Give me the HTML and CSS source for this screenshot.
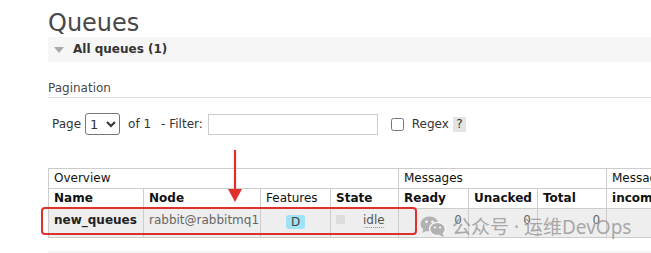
FILE: index.html
```html
<!DOCTYPE html>
<html lang="en">
<head>
    <meta charset="UTF-8">
    <title>Queues</title>
    <link rel="stylesheet" href="styles.css">
</head>
<body>
    <div class="page">
        <h1>Queues</h1>
        <div class="section-bar"><span class="toggle"></span>All queues (1)</div>

        <div class="pagination-title">Pagination</div>
        <div class="filter-row">
            <span>Page</span>
            <select class="page-select"><option>1</option></select>
            <span class="of">of 1</span>
            <span class="filter-label">- Filter:</span>
            <input class="filter-input" type="text">
            <input class="regex-check" type="checkbox">
            <span class="regex-label">Regex</span>
            <span class="help">?</span>
        </div>

        <div class="table-wrap">
            <table class="queues">
                <colgroup>
                    <col style="width: 95px">
                    <col style="width: 117px">
                    <col style="width: 70px">
                    <col style="width: 68px">
                    <col style="width: 70px">
                    <col style="width: 69px">
                    <col style="width: 69px">
                    <col style="width: 120px">
                </colgroup>
                <thead>
                    <tr class="group">
                        <th colspan="4">Overview</th>
                        <th colspan="3">Messages</th>
                        <th>Message rates</th>
                    </tr>
                    <tr class="cols">
                        <th>Name</th>
                        <th>Node</th>
                        <th class="plain">Features</th>
                        <th>State</th>
                        <th>Ready</th>
                        <th>Unacked</th>
                        <th>Total</th>
                        <th>incoming</th>
                    </tr>
                </thead>
                <tbody>
                    <tr>
                        <td class="name">new_queues</td>
                        <td>rabbit@rabbitmq1</td>
                        <td class="center"><span class="badge">D</span></td>
                        <td><div class="state"><span class="status"></span><span class="idle">idle</span></div></td>
                        <td class="num">0</td>
                        <td class="num">0</td>
                        <td class="num">0</td>
                        <td></td>
                    </tr>
                </tbody>
            </table>

            <!-- annotation -->
            <div class="highlight"></div>
            <svg class="arrow" width="16" height="52" viewBox="0 0 16 52">
                <line x1="8" y1="0" x2="8" y2="42" stroke="#e0302c" stroke-width="2.2"/>
                <polygon points="1,39 15,39 8,52" fill="#e0302c"/>
            </svg>

            <div class="watermark">
                <svg width="26" height="21" viewBox="0 0 26 21">
                    <ellipse cx="9.5" cy="8" rx="9" ry="7.4" fill="#9a9a9a"/>
                    <polygon points="3.5,12 2.5,17 8,14" fill="#9a9a9a"/>
                    <circle cx="6.5" cy="5.8" r="1.3" fill="#fff"/>
                    <circle cx="12.5" cy="5.8" r="1.3" fill="#fff"/>
                    <ellipse cx="17.5" cy="13" rx="8" ry="6.6" fill="#9a9a9a" stroke="#fff" stroke-width="1.4"/>
                    <polygon points="22.5,17 24,21 19,19" fill="#9a9a9a"/>
                    <circle cx="15" cy="11.5" r="1.1" fill="#fff"/>
                    <circle cx="20" cy="11.5" r="1.1" fill="#fff"/>
                </svg>
                <span>公众号 · 运维DevOps</span>
            </div>
        </div>

        <div class="section-bar next"></div>
    </div>
</body>
</html>
```

FILE: styles.css
```css
body {
    margin: 0;
    font: 12px "DejaVu Sans", Verdana, sans-serif;
    color: #484848;
    background: #fff;
    overflow: hidden;
}
.page {
    padding-left: 48px;
    width: 900px;
}
h1 {
    font-size: 24px;
    font-weight: normal;
    line-height: 27px;
    margin: 10px 0 0;
    color: #484848;
}
.section-bar {
    background: #f6f6f6;
    height: 25px;
    line-height: 25px;
    font-weight: bold;
    color: #333;
    display: flex;
    align-items: center;
}
.toggle {
    width: 0;
    height: 0;
    border-left: 5px solid transparent;
    border-right: 5px solid transparent;
    border-top: 6px solid #aaa;
    margin: 0 9px 0 6px;
}
.pagination-title {
    margin-top: 19px;
    line-height: 14px;
    padding-bottom: 2px;
    border-bottom: 1px solid #ddd;
}
.filter-row {
    margin-top: 15px;
    display: flex;
    align-items: center;
    height: 22px;
    padding-left: 4px;
    color: #333;
}
.page-select {
    margin-left: 4px;
    width: 35px;
    height: 22px;
    font: 13px "DejaVu Sans", Verdana, sans-serif;
    border: 1px solid #767676;
    border-radius: 3px;
    background: #fff;
    color: #333;
}
.of {
    margin-left: 8px;
}
.filter-label {
    margin-left: 10px;
}
.filter-input {
    margin: 0 0 0 5px;
    width: 170px;
    height: 21px;
    box-sizing: border-box;
    border: 1px solid #ccc;
}
.regex-check {
    margin: 0 0 0 13px;
    width: 13px;
    height: 13px;
}
.regex-label {
    margin-left: 8px;
}
.help {
    margin-left: 4px;
    width: 13px;
    height: 15px;
    line-height: 15px;
    text-align: center;
    background: #e4e4e4;
}
.table-wrap {
    position: relative;
    margin-top: 33px;
}
.queues {
    border-collapse: collapse;
    table-layout: fixed;
    width: 678px;
}
.queues th,
.queues td {
    border: 1px solid #ccc;
    padding: 0 5px;
    text-align: left;
    white-space: nowrap;
    overflow: hidden;
}
.queues th {
    height: 19px;
    line-height: 19px;
    color: #111;
    background: #fff;
}
.group th,
.cols th.plain {
    font-weight: normal;
}
.queues td {
    background: #eee;
    height: 20px;
    padding: 4px 5px;
    vertical-align: top;
    line-height: 14px;
    color: #666;
}
.queues td.name {
    font-weight: bold;
    color: #222;
}
.queues td.center {
    text-align: center;
}
.queues td.num {
    text-align: right;
    padding-right: 6px;
}
.badge {
    display: inline-block;
    margin-top: 2px;
    padding: 0 5px;
    line-height: 14px;
    background: #9fe3f6;
    color: #444;
    border-radius: 3px;
}
.state {
    display: flex;
    align-items: flex-start;
}
.status {
    width: 9px;
    height: 9px;
    margin-top: 2px;
    background: #ddd;
}
.idle {
    margin-left: 18px;
    border-bottom: 1px dotted #888;
    border-radius: 3px;
    color: #555;
}
.highlight {
    position: absolute;
    left: -7px;
    top: 39px;
    width: 372px;
    height: 24px;
    border: 2px solid #e0302c;
    border-radius: 4px;
}
.arrow {
    position: absolute;
    left: 179px;
    top: -18px;
}
.watermark {
    position: absolute;
    left: 372px;
    top: 44px;
    display: flex;
    align-items: center;
    gap: 6px;
    font: 19px "Noto Sans", "Noto Sans CJK SC", sans-serif;
    color: #8a8a8a;
    opacity: 0.7;
}
.section-bar.next {
    margin-top: 13px;
}
```
